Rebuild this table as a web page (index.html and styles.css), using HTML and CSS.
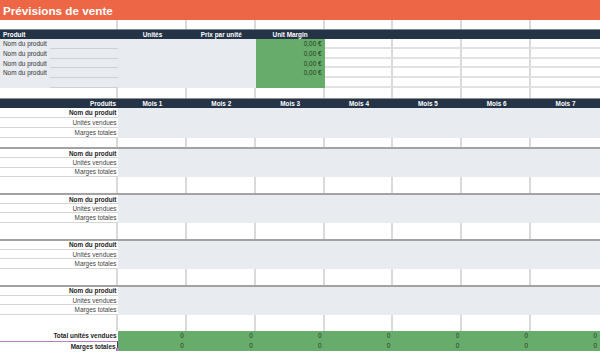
FILE: index.html
```html
<!DOCTYPE html>
<html lang="fr">
<head>
<meta charset="utf-8">
<title>Prévisions de vente</title>
<link rel="stylesheet" href="styles.css">
</head>
<body>
<div class="sheet">
  <div class="title">Prévisions de vente</div>

  <div class="grid r-blank9">
    <div class="v"></div><div class="v"></div><div class="v"></div><div class="v"></div><div class="v"></div><div class="v"></div><div class="v"></div><div></div>
  </div>

  <div class="grid head">
    <div class="hl">Produit</div>
    <div class="hc">Unités</div>
    <div class="hc">Prix par unité</div>
    <div class="hc">Unit Margin</div>
    <div></div><div></div><div></div><div></div>
  </div>

  <div class="grid prod">
    <div class="pname"><span class="plbl">Nom du produit</span><span class="uline"></span></div>
    <div class="pgray"></div>
    <div class="pgreen">0,00 €</div>
    <div class="pw v"></div><div class="pw v"></div><div class="pw v"></div><div class="pw"></div>
  </div>
  <div class="grid prod">
    <div class="pname"><span class="plbl">Nom du produit</span><span class="uline"></span></div>
    <div class="pgray"></div>
    <div class="pgreen">0,00 €</div>
    <div class="pw v"></div><div class="pw v"></div><div class="pw v"></div><div class="pw"></div>
  </div>
  <div class="grid prod">
    <div class="pname"><span class="plbl">Nom du produit</span><span class="uline"></span></div>
    <div class="pgray"></div>
    <div class="pgreen">0,00 €</div>
    <div class="pw v"></div><div class="pw v"></div><div class="pw v"></div><div class="pw"></div>
  </div>
  <div class="grid prod">
    <div class="pname"><span class="plbl">Nom du produit</span><span class="uline"></span></div>
    <div class="pgray"></div>
    <div class="pgreen">0,00 €</div>
    <div class="pw v"></div><div class="pw v"></div><div class="pw v"></div><div class="pw"></div>
  </div>
  <div class="grid prod">
    <div class="pname"><span class="plbl"></span><span class="uline"></span></div>
    <div class="pgray"></div>
    <div class="pgreen"></div>
    <div class="pw v"></div><div class="pw v"></div><div class="pw v"></div><div class="pw"></div>
  </div>

  <div class="grid r-blank10">
    <div class="v"></div><div class="v"></div><div class="v"></div><div class="v"></div><div class="v"></div><div class="v"></div><div class="v"></div><div></div>
  </div>

  <div class="grid head head2">
    <div class="hr">Produits</div>
    <div class="hc">Mois 1</div>
    <div class="hc">Mois 2</div>
    <div class="hc">Mois 3</div>
    <div class="hc">Mois 4</div>
    <div class="hc">Mois 5</div>
    <div class="hc">Mois 6</div>
    <div class="hc">Mois 7</div>
  </div>

  <div class="block first">
    <div class="lbl strong">Nom du produit</div>
    <div class="lbl">Unités vendues</div>
    <div class="lbl">Marges totales</div>
    <div class="mgray"></div>
    <div class="b v"></div><div class="b v"></div><div class="b v"></div><div class="b v"></div><div class="b v"></div><div class="b v"></div><div class="b v"></div><div class="b"></div>
  </div>

  <div class="block">
    <div class="lbl strong">Nom du produit</div>
    <div class="lbl">Unités vendues</div>
    <div class="lbl">Marges totales</div>
    <div class="mgray"></div>
    <div class="b v"></div><div class="b v"></div><div class="b v"></div><div class="b v"></div><div class="b v"></div><div class="b v"></div><div class="b v"></div><div class="b"></div>
  </div>

  <div class="block">
    <div class="lbl strong">Nom du produit</div>
    <div class="lbl">Unités vendues</div>
    <div class="lbl">Marges totales</div>
    <div class="mgray"></div>
    <div class="b v"></div><div class="b v"></div><div class="b v"></div><div class="b v"></div><div class="b v"></div><div class="b v"></div><div class="b v"></div><div class="b"></div>
  </div>

  <div class="block">
    <div class="lbl strong">Nom du produit</div>
    <div class="lbl">Unités vendues</div>
    <div class="lbl">Marges totales</div>
    <div class="mgray"></div>
    <div class="b v"></div><div class="b v"></div><div class="b v"></div><div class="b v"></div><div class="b v"></div><div class="b v"></div><div class="b v"></div><div class="b"></div>
  </div>

  <div class="block">
    <div class="lbl strong">Nom du produit</div>
    <div class="lbl">Unités vendues</div>
    <div class="lbl">Marges totales</div>
    <div class="mgray"></div>
    <div class="b v"></div><div class="b v"></div><div class="b v"></div><div class="b v"></div><div class="b v"></div><div class="b v"></div><div class="b v"></div><div class="b"></div>
  </div>

  <div class="grid tot">
    <div class="tl">Total unités vendues</div>
    <div class="tv">0</div><div class="tv">0</div><div class="tv">0</div><div class="tv">0</div><div class="tv">0</div><div class="tv">0</div><div class="tv">0</div>
  </div>
  <div class="grid tot">
    <div class="tl sel">Marges totales</div>
    <div class="tv">0</div><div class="tv">0</div><div class="tv">0</div><div class="tv">0</div><div class="tv">0</div><div class="tv">0</div><div class="tv">0</div>
  </div>
</div>
</body>
</html>
```

FILE: styles.css
```css
* { box-sizing: border-box; }
html, body { margin: 0; padding: 0; background: #fff; }
body {
  font-family: "Liberation Sans", Arial, sans-serif;
  color: #333;
  width: 600px;
  height: 352px;
  overflow: hidden;
}
.sheet { width: 600px; }

.title {
  height: 20px;
  background: #ed6746;
  color: #fff;
  font-weight: bold;
  font-size: 11.7px;
  line-height: 21px;
  padding-left: 3px;
}

.grid {
  display: grid;
  grid-template-columns: 118px repeat(7, 1fr);
}

.v { border-right: 2px solid #dadada; }

.r-blank9 { height: 9px; }
.r-blank10 { height: 10px; }

.head {
  height: 10px;
  background: #243345;
  color: #fff;
  font-weight: bold;
  font-size: 6.4px;
  line-height: 10px;
  border-top: 1px solid #7d8591;
}
.head2 { border-top: 1px solid #8e8e8e; }
.hl { padding-left: 3px; }
.hc { text-align: center; }
.hr { text-align: right; padding-right: 2px; }

.prod { height: 9.8px; font-size: 6.4px; line-height: 9.8px; }
.pname { display: flex; background: #e8ebef; }
.plbl { width: 50px; padding-left: 3px; color: #333; white-space: nowrap; }
.uline { flex: 1; border-bottom: 1.5px solid #cdd0d4; }
.pgray { grid-column: span 2; background: #e8ebef; }
.pgreen {
  background: #68ac6b;
  text-align: right;
  padding-right: 3px;
  color: #1f3a21;
}
.pw { border-bottom: 2px solid #e2e2e2; }

.block {
  display: grid;
  grid-template-columns: 118px repeat(7, 1fr);
  grid-template-rows: repeat(3, 9.3px) 16px;
  border-top: 2px solid #a2a2a2;
  font-size: 6.4px;
}
.block.first {
  grid-template-rows: repeat(3, 10px) 9px;
  border-top: none;
}
.lbl {
  grid-column: 1;
  text-align: right;
  padding-right: 1.5px;
  color: #444;
  border-bottom: 1px solid #d6d6d6;
  display: flex;
  align-items: center;
  justify-content: flex-end;
  white-space: nowrap;
}
.lbl.strong { font-weight: bold; color: #1e1e1e; }
.mgray { grid-column: 2 / -1; grid-row: 1 / 4; background: #e8ebef; }
.b { grid-row: 4; }

.tot { height: 10px; font-size: 6.4px; line-height: 10px; }
.tl {
  text-align: right;
  padding-right: 1.5px;
  font-weight: bold;
  color: #1e1e1e;
  white-space: nowrap;
}
.tv {
  background: #68ac6b;
  text-align: right;
  padding-right: 3px;
  color: #1f3a21;
}
.sel {
  position: relative;
  border-top: 1px solid #b57fc0;
  border-right: 1px solid #444;
  line-height: 9px;
}
.sel::after {
  content: "";
  position: absolute;
  right: -2px;
  bottom: 0;
  width: 3px;
  height: 3px;
  background: #b57fc0;
}
```
